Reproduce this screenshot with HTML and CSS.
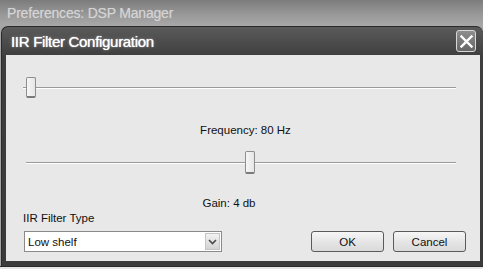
FILE: index.html
```html
<!DOCTYPE html>
<html lang="en">
<head>
    <meta charset="UTF-8">
    <title>IIR Filter Configuration</title>
    <link rel="stylesheet" href="styles.css">
</head>
<body>

<div class="parent-bar">Preferences: DSP Manager</div>

<div class="dialog">
    <div class="dialog-title">
        <span class="title-text">IIR Filter Configuration</span>
        <button class="close-btn" title="Close">
            <svg width="13" height="13" viewBox="0 0 13 13">
                <path d="M1.5 1.5 L11.5 11.5 M11.5 1.5 L1.5 11.5" stroke="#ffffff" stroke-width="2.4" stroke-linecap="square" fill="none"/>
            </svg>
        </button>
    </div>

    <div class="dialog-body">
        <div class="slider slider-freq">
            <div class="track"></div>
            <div class="thumb" style="left: 3px;"></div>
        </div>
        <div class="value-label label-freq">Frequency: 80 Hz</div>

        <div class="slider slider-gain">
            <div class="track"></div>
            <div class="thumb" style="left: 219px;"></div>
        </div>
        <div class="value-label label-gain">Gain: 4 db</div>

        <div class="type-label">IIR Filter Type</div>
        <div class="bottom-row">
            <div class="select">
                <span>Low shelf</span>
                <span class="select-arrow">
                    <svg width="9" height="6" viewBox="0 0 9 6">
                        <path d="M1 1 L4.5 4.5 L8 1" stroke="#4a4a4a" stroke-width="1.6" fill="none"/>
                    </svg>
                </span>
            </div>
            <div class="buttons">
                <button class="btn">OK</button>
                <button class="btn">Cancel</button>
            </div>
        </div>
    </div>
</div>

<div class="under-strip"></div>

</body>
</html>
```

FILE: styles.css
```css
body {
    margin: 0;
    width: 483px;
    height: 269px;
    overflow: hidden;
    background-color: #a4a4a4;
    font-family: "Liberation Sans", Arial, sans-serif;
    color: #111111;
}
.parent-bar {
    height: 26px;
    box-sizing: border-box;
    padding: 5px 0 0 7px;
    background: linear-gradient(#7c7c7c, #9a9a9a 60%, #a8a8a8);
    color: #d4d4d4;
    font-size: 14px;
    letter-spacing: -0.2px;
    text-shadow: 0 0 1px rgba(210, 210, 210, 0.6);
}
.dialog {
    margin-left: 1px;
    background: linear-gradient(#5a5a5a, #3e3e3e 30px, #3a3a3a);
    border-radius: 7px 7px 0 0;
    padding: 0 3px 5px 4px;
    border: 1px solid #2a2a2a;
    border-bottom: none;
    border-right: none;
}
.dialog-title {
    height: 28px;
    display: flex;
    align-items: center;
    justify-content: space-between;
}
.title-text {
    color: #ffffff;
    font-size: 15px;
    padding-left: 5px;
    letter-spacing: -0.3px;
    text-shadow: 0 0 1px #ffffff, 0 0 4px rgba(255, 255, 255, 0.3);
}
.close-btn {
    width: 20px;
    height: 22px;
    margin-right: 4px;
    padding: 0;
    display: flex;
    align-items: center;
    justify-content: center;
    background: linear-gradient(#8e8e8e, #666666);
    border: 1px solid #d8d8d8;
    border-radius: 3px;
}
.dialog-body {
    height: 206px;
    box-sizing: border-box;
    background-color: #e8e8e8;
    padding-top: 22px;
    font-size: 11.5px;
}
.slider {
    position: relative;
    height: 21px;
}
.slider-freq {
    margin: 0 24px 0 17px;
}
.slider-gain {
    margin: 14px 24px 0 20px;
    height: 23px;
}
.track {
    position: absolute;
    left: 0;
    right: 0;
    top: 50%;
    margin-top: -1px;
    height: 1px;
    background-color: #9a9a9a;
    border-bottom: 1px solid #ffffff;
}
.thumb {
    position: absolute;
    top: 0;
    bottom: 0;
    width: 8px;
    background: linear-gradient(90deg, #f6f6f6, #e6e6e6);
    border: 1px solid #8e8e8e;
    border-bottom: 2px solid #7a7a7a;
    border-radius: 2px;
}
.value-label {
    text-align: center;
    height: 14px;
    line-height: 14px;
}
.label-freq {
    margin-top: 25px;
    padding-left: 5px;
}
.label-gain {
    margin-top: 22px;
    padding-right: 28px;
}
.type-label {
    margin-top: 1px;
    padding-left: 17px;
    height: 14px;
    line-height: 14px;
}
.bottom-row {
    display: flex;
    justify-content: space-between;
    align-items: center;
    margin-top: 6px;
    padding: 0 14px 0 18px;
}
.select {
    width: 198px;
    height: 21px;
    box-sizing: border-box;
    background-color: #ffffff;
    border: 1px solid #8a8a8a;
    display: flex;
    align-items: center;
    justify-content: space-between;
    padding: 0 1px 0 3px;
}
.select-arrow {
    width: 15px;
    height: 17px;
    display: flex;
    align-items: center;
    justify-content: center;
    background: linear-gradient(#f2f2f2, #d4d4d4);
    border: 1px solid #c4c4c4;
    box-sizing: border-box;
}
.buttons {
    display: flex;
    gap: 9px;
}
.btn {
    width: 73px;
    height: 21px;
    padding: 0;
    font-family: "Liberation Sans", Arial, sans-serif;
    font-size: 11.5px;
    color: #111111;
    background: linear-gradient(#f6f6f6, #e6e6e6 50%, #dadada);
    border: 1px solid #5a5a5a;
    border-radius: 3px;
}
.under-strip {
    height: 10px;
    background-color: #e4e4e4;
    border-top: 1px solid #2a2a2a;
}
```
